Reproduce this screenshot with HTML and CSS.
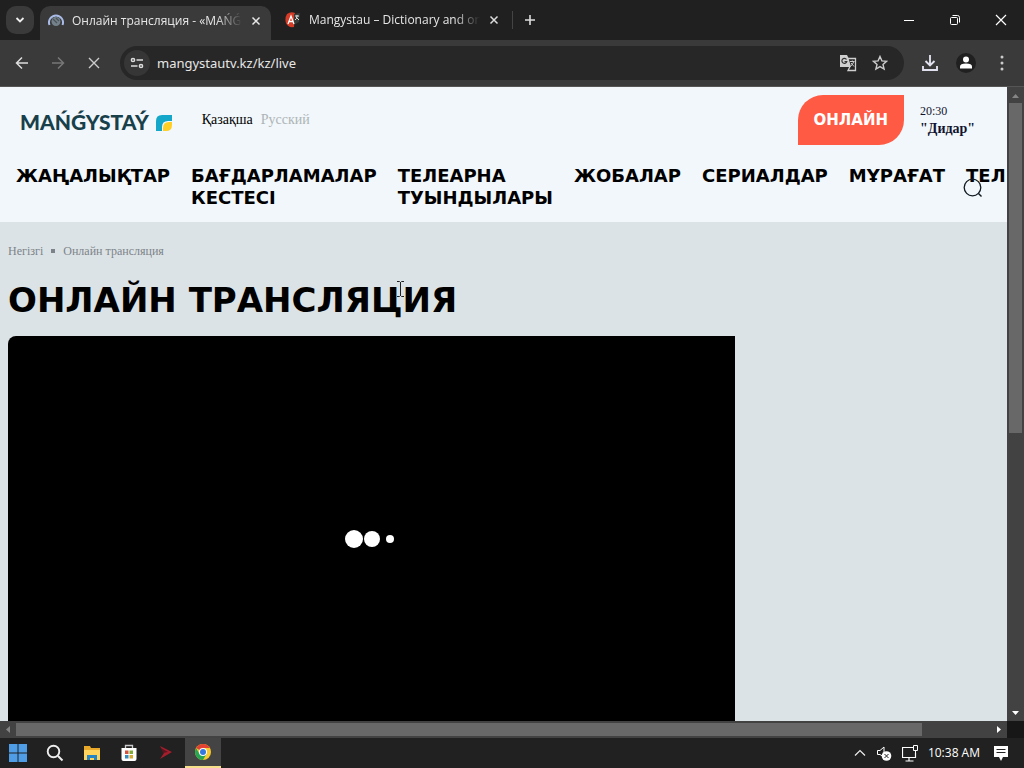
FILE: index.html
```html
<!DOCTYPE html>
<html lang="kk">
<head>
<meta charset="utf-8">
<title>Онлайн трансляция - «MAŃǴYSTAÝ»</title>
<link rel="stylesheet" href="styles.css">
</head>
<body>
<div class="desktop">
  <div class="tabstrip">
    <button class="tab-search" aria-label="Search tabs"><svg width="10" height="8" viewBox="0 0 10 8"><path d="M1.500 2l3.500 3.500L8.500 2" fill="none" stroke="#eee" stroke-width="1.800"/></svg></button>
    <div class="tab tab-active">
      <svg width="16" height="16" viewBox="0 0 16 16"><path d="M1.500 12A7 7 0 1 1 14.500 12" fill="none" stroke="#a9bce8" stroke-width="2"/><circle cx="8" cy="8.500" r="4.500" fill="#74808a"/><path d="M5 6l4 4M8 5l3 3" stroke="#4a5359" stroke-width="1.300"/></svg>
      <button class="tab-title">Онлайн трансляция - «MAŃǴYSTAÝ»</button>
      <button class="tab-close" aria-label="Close tab"><svg width="10" height="10" viewBox="0 0 10 10"><path d="M1.500 1.500l7 7M8.500 1.500l-7 7" stroke="#e8e8e8" stroke-width="1.500"/></svg></button>
    </div>
    <div class="tab">
      <svg width="16" height="16" viewBox="0 0 16 16"><path d="M2 2Q6-1 10 1l-1 14Q3 16 1 11-.5 6 2 2z" fill="#d43c27"/><path d="M9 2l6-1-1 9-5 3z" fill="#353b36"/><path d="M3 12l3-8 3 8M4 9.500h4" fill="none" stroke="#fff" stroke-width="1.300"/><path d="M10 4h4M12 3v1q0 3-2 4M11 5l3 3" fill="none" stroke="#ddd"/></svg>
      <button class="tab-title">Mangystau – Dictionary and online translation</button>
      <button class="tab-close" aria-label="Close tab"><svg width="10" height="10" viewBox="0 0 10 10"><path d="M1.500 1.500l7 7M8.500 1.500l-7 7" stroke="#ddd" stroke-width="1.500"/></svg></button>
    </div>
    <button class="new-tab" aria-label="New tab"><svg width="12" height="12" viewBox="0 0 12 12"><path d="M6 1v10M1 6h10" stroke="#ddd" stroke-width="1.600"/></svg></button>
    <div class="window-controls">
      <button aria-label="Minimize"><svg width="12" height="12" viewBox="0 0 12 12"><path d="M1 6.500h10" stroke="#fff"/></svg></button>
      <button aria-label="Restore"><svg width="12" height="12" viewBox="0 0 12 12"><rect x="1.500" y="3.500" width="7" height="7" rx="1" fill="none" stroke="#fff"/><path d="M3.500 1.500h5q2 0 2 2v5" fill="none" stroke="#fff"/></svg></button>
      <button aria-label="Close"><svg width="12" height="12" viewBox="0 0 12 12"><path d="M1 1l10 10M11 1L1 11" stroke="#fff" stroke-width="1.200"/></svg></button>
    </div>
  </div>

  <div class="toolbar">
    <button class="nav-button" aria-label="Back"><svg width="14" height="14" viewBox="0 0 14 14"><path d="M13 7H2M7 1.500L1.500 7 7 12.500" fill="none" stroke="#ddd" stroke-width="1.500"/></svg></button>
    <button class="nav-button" aria-label="Forward"><svg width="14" height="14" viewBox="0 0 14 14"><path d="M1 7h11M7 1.500L12.500 7 7 12.500" fill="none" stroke="#777" stroke-width="1.500"/></svg></button>
    <button class="nav-button" aria-label="Stop"><svg width="12" height="12" viewBox="0 0 12 12"><path d="M1 1l10 10M11 1L1 11" stroke="#ccc" stroke-width="1.400"/></svg></button>
    <div class="omnibox">
      <button class="site-info" aria-label="Site information"><svg width="14" height="12" viewBox="0 0 14 12"><g fill="none" stroke="#ddd" stroke-width="1.500"><circle cx="3" cy="3" r="1.600"/><path d="M6.500 3H13M1 9h6.500"/><circle cx="11" cy="9" r="1.600"/></g></svg></button>
      <input class="url" type="text" aria-label="Address" value="mangystautv.kz/kz/live">
      <button class="box-button" aria-label="Translate"><svg width="18" height="18" viewBox="0 0 18 18"><path d="M1 1h7l1.500 3L12 13H1z" fill="#cfcfcf"/><path d="M9 4.500h7.500v12H9l2-4" fill="none" stroke="#cfcfcf" stroke-width="1.300"/><path d="M7.500 5.500a2.500 2.500 0 1 0 .3 2H5.500" fill="none" stroke="#333" stroke-width="1.200"/><path d="M11 7.500h4.500M13.300 6.500v1M14.800 7.500q-1 3-3 4.500M12 9l3 3.500" fill="none" stroke="#cfcfcf"/></svg></button>
      <button class="box-button" aria-label="Bookmark"><svg width="16" height="16" viewBox="0 0 16 16"><path d="M8 1.500l1.900 4.400 4.600.4-3.500 3.100 1.100 4.700L8 11.600l-4.100 2.500L5 9.400 1.500 6.300l4.600-.4z" fill="none" stroke="#ccc" stroke-width="1.400"/></svg></button>
    </div>
    <button class="tool-button" aria-label="Downloads"><svg width="18" height="18" viewBox="0 0 18 18"><path d="M9 1v10M4.500 7L9 11.500 13.500 7M2 12v4h14v-4" fill="none" stroke="#e0e0ee" stroke-width="1.900"/></svg></button>
    <button class="tool-button" aria-label="Profile"><svg width="20" height="20" viewBox="0 0 20 20"><circle cx="10" cy="10" r="10" fill="#202020"/><circle cx="10" cy="6.500" r="3" fill="#fff"/><path d="M4 15.500v-2q0-3 6-3t6 3v2z" fill="#fff"/></svg></button>
    <button class="tool-button" aria-label="Menu"><svg width="4" height="16" viewBox="0 0 4 16"><g fill="#ccc"><circle cx="2" cy="2" r="1.500"/><circle cx="2" cy="8" r="1.500"/><circle cx="2" cy="14" r="1.500"/></g></svg></button>
  </div>

  <div class="viewport">
    <div class="site">
      <header class="site-header">
        <div class="header-top">
          <a class="logo" href="#">MAŃǴYSTAÝ<svg width="17" height="17" viewBox="0 0 17 17"><path d="M1 17V7Q1 1 7 1h10v6h-4Q7 7 7 13v4z" fill="#14a7c9"/><path d="M8 17v-3q0-6 6-6h3v3q0 6-6 6z" fill="#ffcf25"/></svg></a>
          <div class="languages"><a class="lang-current" href="#">Қазақша</a><a class="lang-other" href="#">Русский</a></div>
          <a class="live-button" href="#">ОНЛАЙН</a>
          <div class="now"><span>20:30</span><strong>"Дидар"</strong></div>
        </div>
        <nav class="menu">
          <a href="#">ЖАҢАЛЫҚТАР</a>
          <a href="#">БАҒДАРЛАМАЛАР<br>КЕСТЕСІ</a>
          <a href="#">ТЕЛЕАРНА<br>ТУЫНДЫЛАРЫ</a>
          <a href="#">ЖОБАЛАР</a>
          <a href="#">СЕРИАЛДАР</a>
          <a href="#">МҰРАҒАТ</a>
          <a href="#">ТЕЛ</a>
        </nav>
        <button class="search" aria-label="Іздеу"><svg width="20" height="20" viewBox="0 0 20 20"><circle cx="9.500" cy="9.500" r="8.300" fill="none" stroke="#111a22" stroke-width="1.300"/><path d="M15.500 15.500l3 3" stroke="#111a22" stroke-width="1.400"/></svg></button>
      </header>
      <main class="content">
        <div class="crumbs"><a href="#">Негізгі</a><i class="dot"></i><span>Онлайн трансляция</span></div>
        <h1 class="title">ОНЛАЙН ТРАНСЛЯЦИЯ</h1>
        <div class="player"><i class="ball ball-large"></i><i class="ball ball-medium"></i><i class="ball ball-small"></i></div>
      </main>
    </div>
    <div class="scroll-v"><svg class="arrow" width="9" height="16" viewBox="0 0 9 16"><path d="M1 11l3.500-4L8 11z" fill="#858585"/></svg><div class="thumb-v"></div><svg class="arrow" width="9" height="16" viewBox="0 0 9 16"><path d="M1 6l3.500 4L8 6z" fill="#fff"/></svg></div>
    <div class="scroll-h"><svg class="arrow" width="16" height="9" viewBox="0 0 16 9"><path d="M10 1L6 4.500 10 8z" fill="#858585"/></svg><div class="thumb-h"></div><svg class="arrow" width="16" height="9" viewBox="0 0 16 9"><path d="M6 1l4 3.500L6 8z" fill="#fff"/></svg></div>
    <div class="corner"></div>
  </div>

  <div class="taskbar">
    <button class="task" aria-label="Start"><svg width="18" height="18" viewBox="0 0 18 18"><path d="M0 0h8.500v8.500H0zM9.500 0H18v8.500H9.500zM0 9.500h8.500V18H0zM9.500 9.500H18V18H9.500z" fill="#4f9de6"/></svg></button>
    <button class="task" aria-label="Search"><svg width="18" height="18" viewBox="0 0 18 18"><circle cx="7.500" cy="7.500" r="5.800" fill="none" stroke="#eee" stroke-width="1.900"/><path d="M12 12l4.500 4.500" stroke="#eee" stroke-width="2"/></svg></button>
    <button class="task" aria-label="File Explorer"><svg width="18" height="16" viewBox="0 0 18 16"><path d="M1 1h6l1 2h9v12H1z" fill="#e8a92b"/><path d="M1 5h16v10H1z" fill="#ffd45c"/><path d="M4 15v-5h10v5h-3v-2H7v2z" fill="#2384c6"/></svg></button>
    <button class="task" aria-label="Store"><svg width="18" height="18" viewBox="0 0 18 18"><path d="M5.500 4V1.500h7V4" fill="none" stroke="#ccc" stroke-width="1.300"/><path d="M1.500 4h15v11q0 2-2 2h-11q-2 0-2-2z" fill="#fff"/><path d="M5 6.500h3.500V10H5z" fill="#d55340"/><path d="M9.500 6.500H13V10H9.500z" fill="#80ad35"/><path d="M5 11h3.500v3.500H5z" fill="#368bc0"/><path d="M9.500 11H13v3.500H9.500z" fill="#d5aa2f"/></svg></button>
    <button class="task" aria-label="Media tool"><svg width="16" height="16" viewBox="0 0 16 16"><path d="M2 1l12 6-12 7 4-6z" fill="#a61d2c"/><path d="M3 3l7 4-5 1z" fill="#591521"/></svg></button>
    <button class="task task-active" aria-label="Chrome"><svg width="16" height="16" viewBox="0 0 16 16"><circle cx="8" cy="8" r="8" fill="#f9c92d"/><path d="M8 8L1.100 4A8 8 0 0 1 14.900 4H8z" fill="#e24232"/><path d="M1.100 4A8 8 0 0 0 8 16l3.500-6H4.500z" fill="#27a551"/><circle cx="8" cy="8" r="4" fill="#fff"/><circle cx="8" cy="8" r="3" fill="#3478df"/></svg></button>
    <div class="tray">
      <svg width="12" height="8" viewBox="0 0 12 8"><path d="M1 6.500l5-5 5 5" fill="none" stroke="#eee" stroke-width="1.200"/></svg>
      <svg width="16" height="16" viewBox="0 0 16 16"><path d="M1.500 5.500H4L8 2v10L4 9.500H1.500z" fill="none" stroke="#fff"/><circle cx="10.500" cy="11" r="4.800" fill="#fff"/><path d="M8.500 9l4 4M12.500 9l-4 4" stroke="#222"/></svg>
      <svg width="16" height="17" viewBox="0 0 16 17"><path d="M11 2.500H.500v10h13V8M7 13v3M3.500 16h8" fill="none" stroke="#fff" stroke-width="1.200"/><path d="M11.500.500h4v5h-4zM13.500 5.500V9" fill="#222" stroke="#fff"/></svg>
      <time class="clock">10:38 AM</time>
      <svg width="14" height="15" viewBox="0 0 14 15"><path d="M0 0h14v11h-5l-2 4-2-4H0z" fill="#fff"/><path d="M2.500 3.500h9M2.500 6.500h9" stroke="#222"/></svg>
    </div>
  </div>
  <svg class="pointer" width="9" height="18" viewBox="0 0 9 18"><path d="M1 1.500h2.500L4.500 2.500l1-1H8M4.500 2v14M1 16.500h2.500l1-1 1 1H8" fill="none" stroke="#222"/></svg>
</div>
</body>
</html>
```
FILE: styles.css
```css
* { box-sizing: border-box; }
body { margin: 0; }
button { display: flex; align-items: center; justify-content: center; padding: 0; border: 0; background: none; font: inherit; color: inherit; }
a { color: inherit; text-decoration: none; }
svg { flex: none; }

.desktop { position: relative; display: flex; flex-direction: column; height: 100vh; overflow: hidden; background: #202020; color: #e6e6e6; font: 12px/16px "Open Sans", "Noto Sans", sans-serif; }

.tabstrip { display: flex; align-items: center; height: 40px; padding-left: 6px; background: #202020; }
.tab-search { width: 28px; height: 28px; border-radius: 10px; background: #3a3a3a; }
.tab { display: flex; align-items: center; gap: 8px; width: 241px; height: 34px; padding: 0 12px 0 14px; }
.tab-active { margin: 6px 0 0 6px; padding: 0 9px 5px 8px; width: 231px; border-radius: 10px 10px 0 0; background: #3a3a3a; }
.tab-title { flex: 1; justify-content: flex-start; min-width: 0; overflow: hidden; white-space: nowrap; -webkit-mask-image: linear-gradient(to right, #000 85%, transparent); mask-image: linear-gradient(to right, #000 85%, transparent); }
.tab-close { width: 12px; height: 16px; }
.new-tab { width: 34px; height: 18px; border-left: 1px solid #444; }
.window-controls { display: flex; margin-left: auto; }
.window-controls button { width: 46px; height: 40px; }

.toolbar { display: flex; align-items: center; height: 47px; padding: 0 4px; background: #3a3a3a; border-bottom: 1px solid #555; }
.nav-button { width: 36px; height: 32px; }
.omnibox { flex: 1; display: flex; align-items: center; height: 34px; margin: 0 8px; padding: 0 8px 0 4px; border-radius: 17px; background: #272727; }
.site-info { width: 26px; height: 26px; border-radius: 13px; background: #363636; }
.url { flex: 1; min-width: 0; padding: 0 0 0 7px; border: 0; background: none; color: #e6e6e6; font: 13px/20px "Noto Sans", "Open Sans", sans-serif; }
.box-button { width: 32px; height: 32px; }
.tool-button { width: 36px; height: 32px; }

.viewport { flex: 1; min-height: 0; display: grid; grid-template: minmax(0, 1fr) 17px / minmax(0, 1fr) 17px; }
.site { min-width: 0; overflow: hidden; background: #dce3e6; color: #000; font: 14px/18px "Liberation Serif", serif; }
.site-header { position: relative; padding: 8px 16px 13px; background: #f1f7fa; }
.header-top { display: flex; align-items: center; height: 50px; }
.logo { display: flex; align-items: center; gap: 6px; padding: 4px 0 0 4px; color: #18404a; font: 900 21px/28px Lato, sans-serif; }
.languages { display: flex; gap: 8px; margin: 0 auto 0 30px; }
.lang-other { color: #aeb4b7; }
.live-button { padding: 14px 16px; border-radius: 25px 0; background: #ff5a43; color: #fff; font: bold 15px/22px "DejaVu Sans", sans-serif; }
.now { display: flex; flex-direction: column; width: 71px; margin-left: 16px; color: #12132f; font-size: 12px; }
.now strong { font-size: 14px; }
.menu { display: flex; gap: 21px; margin-top: 20px; white-space: nowrap; font: bold 18px/22px "DejaVu Sans", sans-serif; }
.search { position: absolute; right: 24px; bottom: 24px; }

.content { padding: 20px 8px 0; }
.crumbs { display: flex; align-items: center; gap: 8px; color: #7d8489; font-size: 12px; }
.dot { width: 4px; height: 4px; background: #7d8489; }
.title { margin: 20px 0 16px; white-space: nowrap; font: bold 34px/40px "DejaVu Sans", sans-serif; }
.player { display: flex; align-items: center; justify-content: center; width: 71vw; aspect-ratio: 16 / 9; padding: 0 4px 2px 0; border-radius: 8px 0 0; background: #000; }
.ball { border-radius: 50%; background: #fff; }
.ball-large { width: 18px; height: 18px; }
.ball-medium { width: 16px; height: 16px; margin: 0 6px 0 1px; }
.ball-small { width: 8px; height: 8px; }

.scroll-v { display: flex; flex-direction: column; align-items: center; background: #424242; }
.thumb-v { flex: 0 0 52%; width: 13px; margin-bottom: auto; background: #686868; }
.scroll-h { display: flex; align-items: center; background: #424242; }
.thumb-h { flex: 0 0 90%; height: 13px; margin-right: auto; background: #686868; }
.corner { background: #171717; }

.taskbar { display: flex; align-items: center; height: 30px; background: #212121; }
.task { width: 36px; height: 30px; margin-right: 1px; }
.task-active { background: #444; border-bottom: 2px solid #f5df8a; }
.tray { display: flex; align-items: center; gap: 10px; margin-left: auto; padding-right: 16px; color: #fff; }
.clock { padding: 0 4px 0 0; }
.pointer { position: absolute; left: 396px; top: 280px; }
```
